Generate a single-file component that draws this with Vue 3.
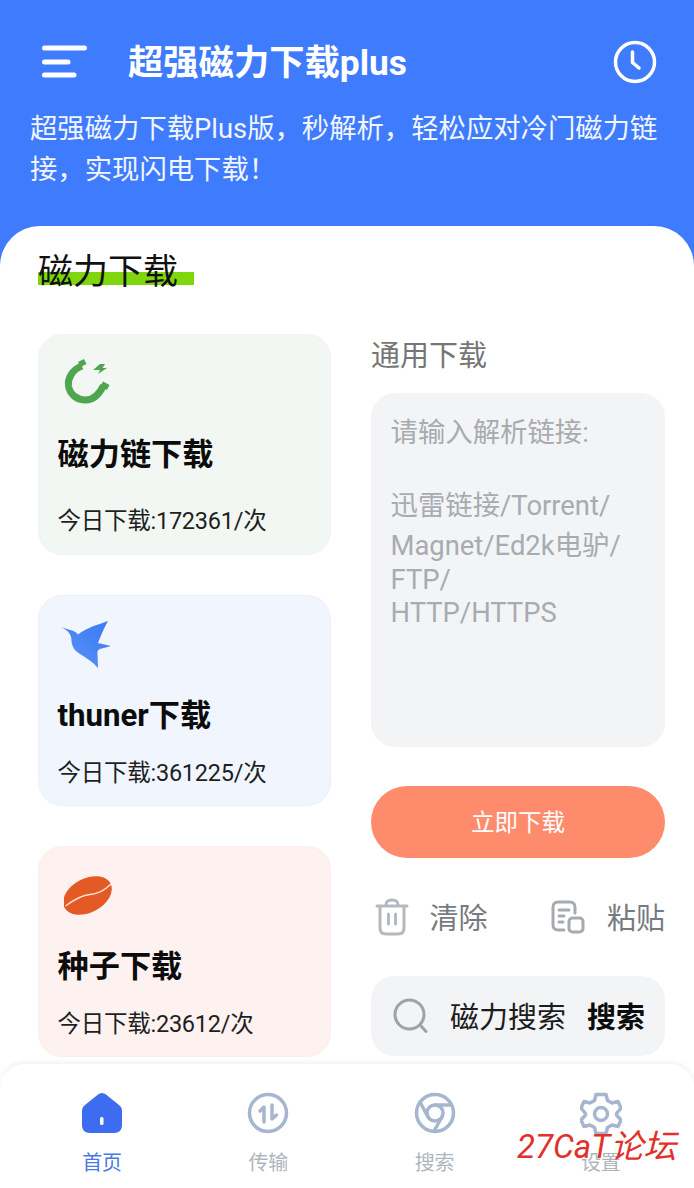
<script setup>
const cards = [
  { key: 'magnet', tone: 'green', title: '磁力链下载', count: '今日下载:172361/次' },
  { key: 'bird', tone: 'blue', title: 'thuner下载', count: '今日下载:361225/次' },
  { key: 'bean', tone: 'red', title: '种子下载', count: '今日下载:23612/次' },
]
const tabs = [
  { key: 'home', label: '首页' },
  { key: 'transfer', label: '传输' },
  { key: 'chrome', label: '搜索' },
  { key: 'gear', label: '设置' },
]
</script>

<template>
  <div class="page">
    <header class="head">
      <div class="bar">
        <svg class="menu" width="46" height="34" viewBox="0 0 46 34" fill="none" stroke="#fff" stroke-width="5" stroke-linecap="round">
          <path d="M2.500 3H42.500M2.500 17H26M2.500 30H32" />
        </svg>
        <h1 class="app-title">超强磁力下载plus</h1>
        <svg class="clock" width="44" height="44" viewBox="0 0 44 44" fill="none" stroke="#fff" stroke-width="3.500" stroke-linecap="round" stroke-linejoin="round">
          <circle cx="22" cy="22" r="19.500" />
          <path d="M19.500 12V22.500L26 28" />
        </svg>
      </div>
      <p class="desc">超强磁力下载Plus版，秒解析，轻松应对冷门磁力链接，实现闪电下载！</p>
    </header>

    <main class="panel">
      <div class="section-title"><span class="mark"></span><span class="section-text">磁力下载</span></div>
      <div class="columns">
        <div class="left">
          <article v-for="c in cards" :key="c.key" class="card" :class="c.tone">
            <svg v-if="c.key === 'magnet'" class="card-icon" width="48" height="46" viewBox="0 0 48 46">
              <path d="M18 7 C8 10.500 3.500 20 4.500 27 C6 36 13.500 41 21.500 41 C29 41 35 36 39.500 26.500" fill="none" stroke="#4ea64f" stroke-width="7" />
              <path d="M14 3 L20 0 L22.500 5 L16.500 8Z M39 22.500 L45.500 26 L43 31 L36.500 27.500Z" fill="#4ea64f" />
              <path d="M36 5 L41 5 L38.500 9 L43 9 L34 15 L36 11 L29 11Z" fill="#4ea64f" />
            </svg>
            <svg v-else-if="c.key === 'bird'" class="card-icon" width="52" height="50" viewBox="0 0 52 50">
              <defs>
                <linearGradient id="birdFill" x1="0" y1="1" x2="1" y2="0">
                  <stop offset="0" stop-color="#5a94f8" />
                  <stop offset="1" stop-color="#3c78f4" />
                </linearGradient>
              </defs>
              <path d="M0 7 L9 10 C12 10.500 15 12 17 14.500 C25 8 36 5 47 1 C43 8 40 15 37 23 L50 26 L39 29 C37 30 36 31 36.500 34 L37 48 C32 42 25 38 19 34 C14 31 11 27 10.500 21 C10.500 15 8 11 0 7Z" fill="url(#birdFill)" />
            </svg>
            <svg v-else class="card-icon" width="48" height="44" viewBox="0 0 48 44">
              <ellipse cx="23.500" cy="21.500" rx="26" ry="17" transform="rotate(-28 23.500 21.500)" fill="#e35a24" />
              <path d="M1.500 32 C11 25 18 21 26 20.500 C33 20 40 17 47 10" fill="none" stroke="#fbe3da" stroke-width="1.400" />
            </svg>
            <h2 class="card-title">{{ c.title }}</h2>
            <p class="card-count">{{ c.count }}</p>
          </article>
        </div>

        <div class="right">
          <div class="right-title">通用下载</div>
          <div class="input-box">
            <div class="ph">请输入解析链接:</div>
            <div class="ph ph-blank">&nbsp;</div>
            <div class="ph">迅雷链接/Torrent/</div>
            <div class="ph ph-gap">Magnet/Ed2k电驴/</div>
            <div class="ph">FTP/</div>
            <div class="ph ph-last">HTTP/HTTPS</div>
          </div>
          <button class="go" type="button">立即下载</button>
          <div class="actions">
            <div class="action">
              <svg width="34" height="38" viewBox="0 0 34 38" fill="none" stroke="#b4b9bf" stroke-width="3" stroke-linecap="round" stroke-linejoin="round">
                <path d="M2 8H32M11 7C11 3 13 2 17 2C21 2 23 3 23 7M5 9V30C5 34 7 36 11 36H23C27 36 29 34 29 30V9M13.500 16V26M20.500 16V26" />
              </svg>
              <span>清除</span>
            </div>
            <div class="action">
              <svg width="34" height="34" viewBox="0 0 34 34" fill="none" stroke="#a6abb1" stroke-width="3" stroke-linecap="round" stroke-linejoin="round">
                <path d="M13 30H7C4 30 2 28 2 25V7C2 4 4 2 7 2H19C22 2 24 4 24 7V13M8 10H18M8 16H13M8 22H12" />
                <rect x="18" y="18" width="14" height="14" rx="3.500" />
              </svg>
              <span>粘贴</span>
            </div>
          </div>
          <div class="search">
            <svg width="36" height="36" viewBox="0 0 36 36" fill="none" stroke="#a0a2a5" stroke-width="3" stroke-linecap="round">
              <circle cx="16.500" cy="16.500" r="14.500" />
              <path d="M28 28L33 33.500" />
            </svg>
            <span class="search-q">磁力搜索</span>
            <span class="search-go">搜索</span>
          </div>
        </div>
      </div>
    </main>

    <nav class="tabs">
      <div v-for="(t, i) in tabs" :key="t.key" class="tab" :class="{ on: i === 0 }">
        <svg v-if="t.key === 'home'" width="42" height="42" viewBox="0 0 42 42">
          <path d="M17 2.500 C19.500 0.500 22.500 0.500 25 2.500 L38 13 C40.500 15 41 17 41 19 V33 C41 38 38 41 33 41 H9 C4 41 1 38 1 33 V19 C1 17 1.500 15 4 13Z" fill="#3d6cf0" />
          <rect x="19" y="25" width="3.500" height="8" rx="1.500" fill="#fff" />
        </svg>
        <svg v-else-if="t.key === 'transfer'" width="42" height="42" viewBox="0 0 42 42" fill="none" stroke="#a6b6cf" stroke-width="3.500" stroke-linecap="round" stroke-linejoin="round">
          <circle cx="21" cy="21" r="18.500" />
          <path d="M17 30V15L13 19M25 13V27L29.500 23" />
        </svg>
        <svg v-else-if="t.key === 'chrome'" width="42" height="42" viewBox="0 0 42 42" fill="none" stroke="#a6b6cf" stroke-width="3.500" stroke-linecap="round" stroke-linejoin="round">
          <circle cx="21" cy="21" r="18.500" />
          <circle cx="21" cy="21" r="8" />
          <path d="M21 13H37M14 25L6 10M28 25L20 39" />
        </svg>
        <svg v-else class="gear" width="42" height="44" viewBox="0 0 42 44" fill="none" stroke="#a6b6cf" stroke-width="3.500" stroke-linejoin="round">
          <path d="M16 2.500 H26 L27.500 8.500 L32 11 L38 9.500 L41 16 L36.500 21.500 V23 L41 28 L38 34.500 L32 33 L27.500 35.500 L26 41.500 H16 L14.500 35.500 L10 33 L4 34.500 L1 28 L5.500 23 V21.500 L1 16 L4 9.500 L10 11 L14.500 8.500Z" />
          <circle cx="21" cy="22" r="6.500" />
        </svg>
        <span class="tab-label">{{ t.label }}</span>
      </div>
    </nav>

    <div class="stamp">27CaT论坛</div>
  </div>
</template>

<style>
html, body { margin: 0; background: #fff; }
</style>

<style scoped>
.page {
  position: relative;
  width: 694px;
  height: 1188px;
  overflow: hidden;
  background: #fff;
  font-family: Roboto, "Noto Sans CJK SC", sans-serif;
  color: #111;
}
.head {
  height: 266px;
  padding: 44px 30px 0;
  box-sizing: border-box;
  background: #3f7bfd;
  color: #fff;
}
.bar {
  display: flex;
  align-items: center;
  height: 36px;
  padding: 0 8px 0 12px;
}
.menu { flex: none; }
.app-title {
  flex: 1;
  margin: 1px 0 0 40px;
  font-size: 35.300px;
  font-weight: 700;
  line-height: 36px;
}
.clock { flex: none; margin-left: 1px; margin-right: -1px; }
.desc {
  margin: 29px 0 0;
  font-size: 27.350px;
  line-height: 41px;
  color: #f1f5ff;
}
.panel {
  margin-top: -40px;
  padding: 26px 29px 0 38px;
  background: #fff;
  border-radius: 40px 40px 0 0;
  position: relative;
  height: 838px;
  box-sizing: border-box;
}
.section-title {
  position: relative;
  height: 42px;
  font-size: 35px;
  line-height: 42px;
  font-weight: 400;
  color: #111;
}
.section-text { position: relative; }
.mark {
  position: absolute;
  left: 0;
  top: 20px;
  width: 156px;
  height: 13px;
  background: #7fd60c;
}
.columns {
  display: grid;
  grid-template-columns: 293px 294px;
  gap: 40px;
  margin-top: 40px;
}
.left { display: flex; flex-direction: column; gap: 40px; }
.card {
  box-sizing: border-box;
  height: 211px;
  padding: 24px 18.500px 0;
  border: 1px solid;
  border-radius: 24px;
}
.green { height: 221px; background: #f3f7f3; border-color: #f0f3f0; }
.blue { background: #f1f6fe; border-color: #ebf1fc; }
.red { padding-top: 27px; background: #fdf2ef; border-color: #fbeeea; }
.card-icon { display: block; margin-left: 6px; }
.blue .card-icon { margin-left: 3px; }
.card-title {
  margin: 26px 0 0;
  font-size: 31.200px;
  line-height: 40px;
  font-weight: 700;
  color: #0c0c0c;
}
.green .card-title { margin-top: 30px; }
.red .card-title { margin-top: 29px; }
.card-count {
  margin: 20px 0 0;
  font-size: 23.500px;
  letter-spacing: -0.250px;
  line-height: 34px;
  color: #1f1f1f;
}
.green .card-count { margin-top: 29px; }
.right { display: flex; flex-direction: column; }
.right-title {
  font-size: 29px;
  line-height: 42px;
  color: #767676;
  margin-top: 1px;
}
.input-box {
  box-sizing: border-box;
  height: 354px;
  margin-top: 16px;
  padding: 22px 19.500px;
  background: #f3f4f6;
  border-radius: 24px;
  color: #a8abb0;
  font-size: 27.400px;
  line-height: 36px;
}
.ph { white-space: nowrap; }
.ph-blank { height: 37px; }
.ph-gap { margin-top: 4px; margin-bottom: -2px; }
.ph-last { margin-top: -3px; }
.go {
  display: block;
  width: 100%;
  height: 72px;
  margin-top: 39px;
  padding: 0 0 3px;
  border: 0;
  border-radius: 36px;
  background: #ff8b6d;
  color: #fff;
  font: inherit;
  font-size: 23.500px;
}
.actions {
  display: flex;
  justify-content: space-between;
  align-items: center;
  height: 40px;
  margin-top: 38px;
  margin-bottom: 2px;
  padding-left: 3.500px;
  font-size: 29px;
  color: #777a7e;
}
.action { display: flex; align-items: center; gap: 22px; }
.action:first-child { gap: 21px; }
.action svg { position: relative; top: 1px; }
.search {
  display: flex;
  align-items: center;
  box-sizing: border-box;
  height: 80px;
  margin-top: 38px;
  padding: 0 20px 2px 22px;
  background: #f3f4f6;
  border-radius: 24px;
  font-size: 29px;
}
.search svg { position: relative; top: 1px; }
.search-q { margin-left: 21px; flex: 1; color: #1c1c1c; }
.search-go { font-weight: 700; color: #0c0c0c; }
.tabs {
  position: absolute;
  left: 0;
  right: 0;
  bottom: 0;
  height: 124px;
  display: grid;
  grid-template-columns: repeat(4, 1fr);
  padding: 0 10px 0 19px;
  box-sizing: border-box;
  background: #fff;
  border-radius: 24px 24px 0 0;
  box-shadow: 0 -2px 5px rgba(0, 0, 0, 0.06);
}
.tab {
  display: flex;
  flex-direction: column;
  align-items: center;
  padding-top: 28px;
  color: #b0b5bd;
}
.tab svg { flex: none; }
.tab .gear { margin-bottom: -2px; }
.tab-label { margin-top: 15px; font-size: 20px; line-height: 28px; }
.on { color: #4a78e6; }
.stamp {
  position: absolute;
  left: 517px;
  top: 1125px;
  font-size: 33px;
  line-height: 44px;
  font-style: italic;
  font-weight: 400;
  color: #e2302b;
  white-space: nowrap;
}
</style>
